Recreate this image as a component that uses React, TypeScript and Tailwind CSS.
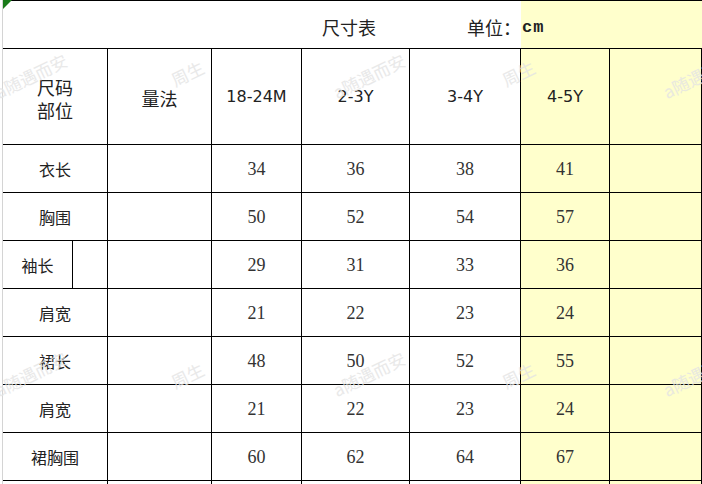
import React from "react";

const cjk = "font-['Noto_Sans_CJK_SC',sans-serif]";
const num = "font-['Liberation_Serif','Noto_Sans_CJK_SC',serif]";

const rows: { label: string; values: string[]; split?: boolean }[] = [
  { label: "衣长", values: ["34", "36", "38", "41"] },
  { label: "胸围", values: ["50", "52", "54", "57"] },
  { label: "袖长", values: ["29", "31", "33", "36"], split: true },
  { label: "肩宽", values: ["21", "22", "23", "24"] },
  { label: "裙长", values: ["48", "50", "52", "55"] },
  { label: "肩宽", values: ["21", "22", "23", "24"] },
  { label: "裙胸围", values: ["60", "62", "64", "67"] },
  { label: "", values: ["", "", "", ""] },
];

const marks = [
  { text: "a随遇而安", x: -4, y: 84 },
  { text: "周生", x: 172, y: 72 },
  { text: "a随遇而安", x: 334, y: 84 },
  { text: "周生", x: 503, y: 72 },
  { text: "a随遇而安", x: 664, y: 84 },
  { text: "a随遇而安", x: -4, y: 382 },
  { text: "周生", x: 172, y: 374 },
  { text: "a随遇而安", x: 334, y: 382 },
  { text: "周生", x: 503, y: 374 },
  { text: "a随遇而安", x: 664, y: 382 },
];

const cell = "border-r border-b border-black flex items-center justify-center";
const yellow = "bg-[#ffffcc]";

export default function App() {
  return (
    <div className="relative w-[702px] h-[484px] overflow-hidden bg-white flex">
      {/* sheet edge */}
      <div className="w-[2px] shrink-0 bg-white" />
      <div className="w-px shrink-0 bg-[#d4d4d4]" />

      <div className="w-[699px] shrink-0">
        {/* title row */}
        <div className="flex h-[49px] border-t border-b border-black leading-[24px]">
          <div className={`w-[518px] flex items-center pl-[319px] pt-[4px] text-[18px] text-[#222] ${cjk}`}>
            <span>尺寸表</span>
            <span className="ml-[91px]">单位：</span>
          </div>
          <div className={`flex-1 ${yellow} flex items-center pl-[1px] pt-[6px]`}>
            <span className="font-['Liberation_Mono',monospace] font-bold text-[17px] tracking-[1px] text-[#222]">cm</span>
          </div>
        </div>

        {/* size grid */}
        <div className="grid grid-cols-[105px_104px_90px_108px_111px_89px_92px]">
          <div className={`${cell} h-[96px] flex-col pt-[4px] text-[18px] leading-[23px] text-[#222] ${cjk}`}>
            <span>尺码</span>
            <span>部位</span>
          </div>
          <div className={`${cell} h-[96px] pt-[4px] text-[18px] text-[#222] ${cjk}`}>量法</div>
          {["18-24M", "2-3Y", "3-4Y", "4-5Y"].map((s, i) => (
            <div
              key={s}
              className={`${cell} h-[96px] text-[16px] text-[#222] font-['DejaVu_Sans',sans-serif] ${i === 3 ? yellow : ""}`}
            >
              {s}
            </div>
          ))}
          <div className={`${cell} h-[96px] ${yellow}`} />

          {rows.map((r, ri) => (
            <React.Fragment key={ri}>
              {r.split ? (
                <div className="h-[48px] border-r border-b border-black flex">
                  <div className={`w-[70px] border-r border-black flex items-center justify-center text-[16px] text-[#222] ${cjk}`}>
                    {r.label}
                  </div>
                  <div className="flex-1" />
                </div>
              ) : (
                <div className={`${cell} h-[48px] text-[16px] text-[#222] ${cjk}`}>{r.label}</div>
              )}
              <div className={`${cell} h-[48px]`} />
              {r.values.map((v, i) => (
                <div
                  key={i}
                  className={`${cell} h-[48px] pt-[2px] text-[18px] text-[#333] ${num} ${i === 3 ? yellow : ""}`}
                >
                  {v}
                </div>
              ))}
              <div className={`${cell} h-[48px] ${yellow}`} />
            </React.Fragment>
          ))}
        </div>
      </div>

      {/* green corner marker */}
      <svg className="absolute left-[3px] top-0" width="9" height="9" viewBox="0 0 9 9">
        <polygon points="0,0 9,0 0,9" fill="#1a7a1a" />
      </svg>

      {/* watermark */}
      {marks.map((m, i) => (
        <span
          key={i}
          className={`absolute pointer-events-none whitespace-nowrap text-[17px] leading-none text-[#e4e4e4] opacity-80 -rotate-[26deg] origin-left ${cjk}`}
          style={{ left: m.x, top: m.y }}
        >
          {m.text}
        </span>
      ))}
    </div>
  );
}
